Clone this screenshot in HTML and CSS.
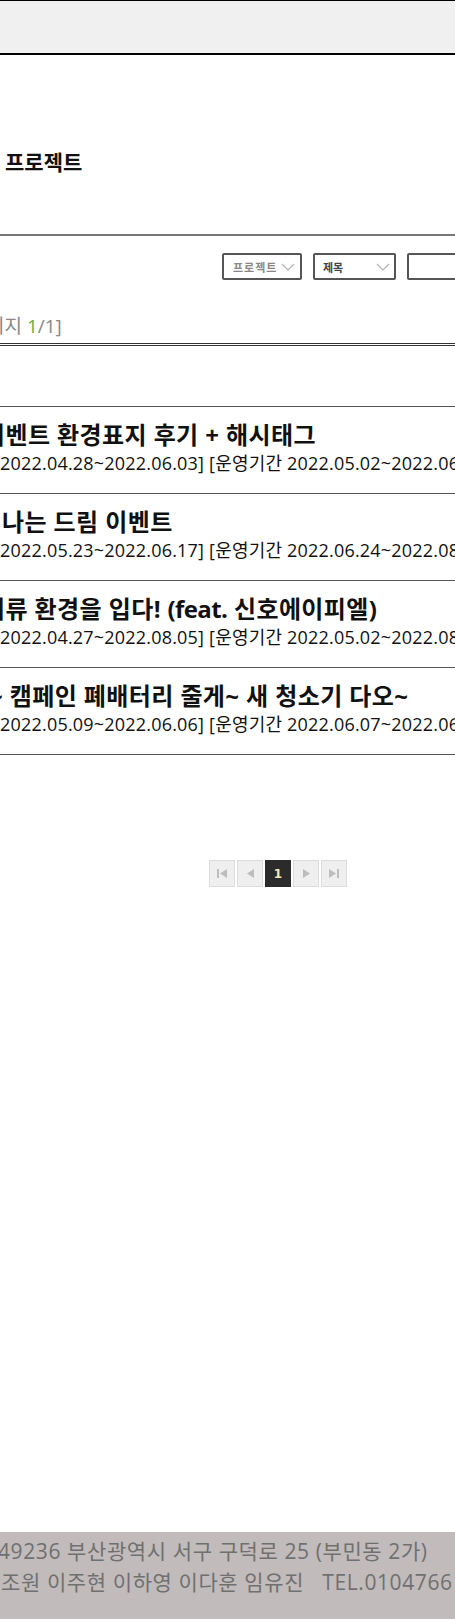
FILE: index.html
```html
<!DOCTYPE html>
<html lang="ko">
<head>
<meta charset="utf-8">
<title>프로젝트</title>
<link rel="stylesheet" href="styles.css">
</head>
<body>
<header class="topbar"></header>
<main class="content">
  <h1 class="page-title">프로젝트</h1>
  <section class="board-head">
    <div class="search">
      <div class="sel sel-cat"><span>프로젝트</span><svg class="chev" viewBox="0 0 14 8" width="14" height="8"><path d="M1 1 L7 7 L13 1" fill="none" stroke="#b5b5b5" stroke-width="1.2"/></svg></div>
      <div class="sel sel-field"><span>제목</span><svg class="chev" viewBox="0 0 14 8" width="14" height="8"><path d="M1 1 L7 7 L13 1" fill="none" stroke="#b5b5b5" stroke-width="1.2"/></svg></div>
      <div class="search-input"></div>
    </div>
    <p class="page-info"><span class="cut-i">이</span>지 <em>1</em>/1]</p>
  </section>
  <ul class="list">
    <li class="item">
      <h2 class="item-title t1">이벤트 환경표지 후기 + 해시태그</h2>
      <p class="item-date">2022.04.28~2022.06.03] [운영기간 2022.05.02~2022.06.30]</p>
    </li>
    <li class="item">
      <h2 class="item-title t2">나는 드림 이벤트</h2>
      <p class="item-date">2022.05.23~2022.06.17] [운영기간 2022.06.24~2022.08.31]</p>
    </li>
    <li class="item">
      <h2 class="item-title t3">의류 환경을 입다! <span class="latin">(feat.</span> 신호에이피엘<span class="latin">)</span></h2>
      <p class="item-date">2022.04.27~2022.08.05] [운영기간 2022.05.02~2022.08.31]</p>
    </li>
    <li class="item">
      <h2 class="item-title t4">~ 캠페인 폐배터리 줄게~ 새 청소기 다오~</h2>
      <p class="item-date">2022.05.09~2022.06.06] [운영기간 2022.06.07~2022.06.30]</p>
    </li>
  </ul>
  <nav class="pager">
    <a class="pg"><svg viewBox="0 0 10 9" width="10" height="9"><rect x="0" y="0" width="2" height="9" fill="#bdbdbd"/><path d="M10 0 L3 4.5 L10 9 Z" fill="#bdbdbd"/></svg></a>
    <a class="pg"><svg viewBox="0 0 7 9" width="7" height="9"><path d="M7 0 L0 4.5 L7 9 Z" fill="#bdbdbd"/></svg></a>
    <a class="pg active">1</a>
    <a class="pg"><svg viewBox="0 0 7 9" width="7" height="9"><path d="M0 0 L7 4.5 L0 9 Z" fill="#bdbdbd"/></svg></a>
    <a class="pg"><svg viewBox="0 0 10 9" width="10" height="9"><path d="M0 0 L7 4.5 L0 9 Z" fill="#bdbdbd"/><rect x="8" y="0" width="2" height="9" fill="#bdbdbd"/></svg></a>
  </nav>
</main>
<footer class="footer">
  <p class="addr">49236 부산광역시 서구 구덕로 25 (부민동 2가)</p>
  <p class="team">조원 이주현 이하영 이다훈 임유진&nbsp;&nbsp;&nbsp;TEL.01047661234</p>
</footer>
</body>
</html>
```

FILE: styles.css
```css
* { box-sizing: border-box; }
html, body { margin: 0; padding: 0; }
body {
  font-family: "Open Sans", "Noto Sans CJK KR", sans-serif;
  color: #111;
  background: #fff;
  overflow-x: hidden;
  min-height: 100vh;
  display: flex;
  flex-direction: column;
}
.topbar {
  height: 55px;
  background: #f0f0f0;
  border-top: 1px solid #000;
  border-bottom: 2px solid #000;
}
.content { white-space: nowrap; }
.page-title {
  margin: 92px 0 0 5px;
  font-size: 21px;
  line-height: 30px;
  font-weight: 700;
}
.board-head {
  margin-top: 57px;
  border-top: 2px solid #777;
  border-bottom: 3px double #333;
  padding: 17px 0 4px;
}
.search {
  display: flex;
  gap: 11px;
  margin-left: 222px;
  width: 400px;
}
.sel, .search-input {
  height: 27px;
  border: 2px solid #555;
  border-radius: 2px;
  background: #fff;
  display: flex;
  align-items: center;
  flex: none;
}
.sel span {
  font-size: 11px;
  font-weight: 700;
  color: #555;
  flex: 1;
}
.sel-cat { width: 80px; padding: 0 5px 0 9px; }
.sel-cat span { color: #888; letter-spacing: 1px; }
.sel-field { width: 83px; padding: 0 4px 0 8px; }
.sel-field span { color: #444; }
.chev { flex: none; }
.search-input { width: 120px; }
.page-info {
  margin: 34px 0 0;
  font-size: 19px;
  line-height: 25px;
  color: #888;
}
.cut-i { margin-left: -13px; }
.page-info em { font-style: normal; color: #5fae3a; }
.list {
  list-style: none;
  margin: 60px 0 0;
  padding: 0;
  border-top: 1px solid #555;
}
.item {
  border-bottom: 1px solid #555;
  padding: 13px 0 18px;
  height: 87px;
}
.item-title {
  margin: 0;
  font-size: 24px;
  line-height: 30px;
  font-weight: 700;
  letter-spacing: 0.4px;
}
.latin { letter-spacing: -0.6px; }
.t1 { margin-left: -17px; }
.t2 { margin-left: 2px; }
.t3 { margin-left: -17px; }
.t4 { margin-left: -11px; }
.item-date {
  margin: 1px 0 0;
  font-size: 18px;
  line-height: 24px;
  color: #111;
  letter-spacing: 0.2px;
}
.pager {
  display: flex;
  gap: 2px;
  margin: 105px 0 0 209px;
}
.pg {
  width: 26px;
  height: 27px;
  border: 1px solid #dcdcdc;
  background: #efefef;
  display: flex;
  align-items: center;
  justify-content: center;
}
.pg.active {
  background: #2b2b2b;
  border-color: #2b2b2b;
  color: #f6ecb8;
  font-family: "DejaVu Sans", sans-serif;
  font-weight: 700;
  font-size: 12px;
}
.footer {
  margin-top: auto;
  height: 87px;
  background: #c1bbbb;
  padding-top: 4px;
  color: #707070;
  white-space: nowrap;
}
.footer p {
  margin: 0;
  font-size: 21px;
  line-height: 31px;
  letter-spacing: 0.6px;
}
.addr { margin-left: -2px !important; }
.team { margin-left: 1px !important; }
```
